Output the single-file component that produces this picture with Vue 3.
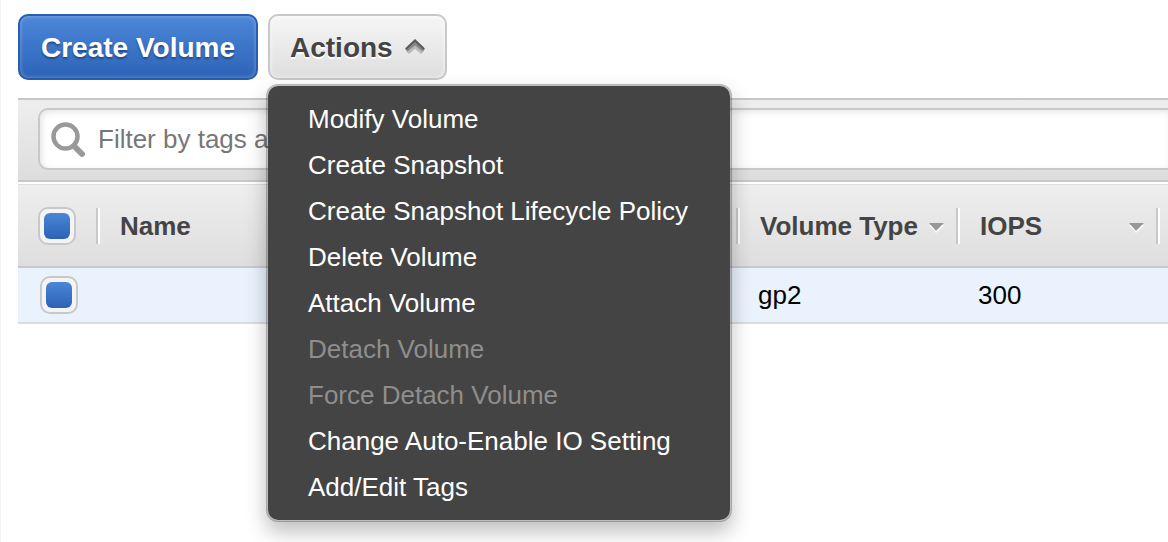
<script setup>
import { ref, computed } from "vue";

const menuOpen = ref(true);
const filter = ref("");

const actions = [
  { label: "Modify Volume" },
  { label: "Create Snapshot" },
  { label: "Create Snapshot Lifecycle Policy" },
  { label: "Delete Volume" },
  { label: "Attach Volume" },
  { label: "Detach Volume", disabled: true },
  { label: "Force Detach Volume", disabled: true },
  { label: "Change Auto-Enable IO Setting" },
  { label: "Add/Edit Tags" }
];

const volumes = ref([{ id: 1, name: "", type: "gp2", iops: 300, selected: true }]);

const allSelected = computed({
  get: () => volumes.value.every((v) => v.selected),
  set: (value) => volumes.value.forEach((v) => (v.selected = value))
});
</script>

<template>
  <main class="volumes">
    <div class="toolbar">
      <button type="button" class="btn primary">Create Volume</button>

      <div class="dropdown">
        <button
          type="button"
          class="btn"
          aria-haspopup="menu"
          :aria-expanded="menuOpen"
          @click="menuOpen = !menuOpen"
        >
          Actions
          <svg class="chevron" viewBox="0 0 20 18" aria-hidden="true">
            <path d="M1 12 L4 15 L10 10 L16 15 L19 12 L10 4 Z" fill="#bbb" />
            <path d="M10 0.5 L20 10 L17.5 12.5 L10 6.5 L2.5 12.5 L0 10 Z" fill="#888" />
            <path d="M1 10 L10 1.5 L19 10" fill="none" stroke="#5a5a5a" stroke-width="2" />
          </svg>
        </button>

        <div v-if="menuOpen" class="menu" role="menu">
          <button
            v-for="action in actions"
            :key="action.label"
            type="button"
            role="menuitem"
            class="menu-item"
            :disabled="action.disabled"
          >
            {{ action.label }}
          </button>
        </div>
      </div>
    </div>

    <div class="filter-bar">
      <label class="filter">
        <svg class="search" viewBox="0 0 36 36" aria-hidden="true">
          <path d="M24 25 L32 33" stroke="#999" stroke-width="6" stroke-linecap="round" />
          <circle cx="15.5" cy="15.5" r="12" fill="none" stroke="#999" stroke-width="4.5" />
        </svg>
        <input
          v-model="filter"
          type="text"
          aria-label="Filter volumes"
          placeholder="Filter by tags and attributes or search by keyword"
        />
      </label>
    </div>

    <table class="grid">
      <thead>
        <tr>
          <th class="col-check">
            <input v-model="allSelected" type="checkbox" aria-label="Select all volumes" />
          </th>
          <th><div class="head">Name</div></th>
          <th class="col-type">
            <div class="head">
              Volume Type
              <svg class="sort" viewBox="0 0 16 14" aria-hidden="true">
                <path d="M1 6 H16 L8 14 Z" fill="#fff" />
                <path d="M1 4 H16 L8 12 Z" fill="#999" />
              </svg>
            </div>
          </th>
          <th class="col-iops">
            <div class="head">
              IOPS
              <svg class="sort" viewBox="0 0 16 14" aria-hidden="true">
                <path d="M1 6 H16 L8 14 Z" fill="#fff" />
                <path d="M1 4 H16 L8 12 Z" fill="#999" />
              </svg>
            </div>
          </th>
          <th class="col-rest"><div class="head"></div></th>
        </tr>
      </thead>
      <tbody>
        <tr v-for="volume in volumes" :key="volume.id" :class="{ selected: volume.selected }">
          <td class="col-check">
            <input v-model="volume.selected" type="checkbox" aria-label="Select volume" />
          </td>
          <td>{{ volume.name }}</td>
          <td>{{ volume.type }}</td>
          <td>{{ volume.iops }}</td>
          <td></td>
        </tr>
      </tbody>
    </table>
  </main>
</template>

<style>
body {
  background: #fff;
}
</style>

<style scoped>
.volumes {
  box-sizing: border-box;
  min-height: 100vh;
  padding: 14px 0 0 17px;
  border-left: 1px solid #f3f3f3;
  font-family: "Liberation Sans", Arial, sans-serif;
  font-size: 26px;
  line-height: 30px;
  color: #000;
}

button,
input {
  font: inherit;
}

.toolbar {
  display: flex;
  gap: 10px;
  margin-bottom: 18px;
}

.btn {
  display: flex;
  align-items: center;
  gap: 12px;
  padding: 17px 20px 15px;
  border: 2px solid #c8c8c8;
  border-radius: 10px;
  background: linear-gradient(#f6f6f6, #dedede);
  box-shadow: inset 0 0 4px rgba(255, 255, 255, 0.8);
  color: #444;
  font-size: 28px;
  font-weight: bold;
  text-shadow: 0 2px 0 #fff;
  white-space: nowrap;
  cursor: pointer;
}

.btn.primary {
  padding-right: 21px;
  padding-left: 21px;
  border-color: #2a5db0;
  background: linear-gradient(#4c87d8, #2c63b8);
  box-shadow: inset 0 0 4px rgba(255, 255, 255, 0.35);
  color: #fff;
  text-shadow: 0 2px 2px rgba(0, 0, 0, 0.35);
}

.chevron {
  width: 20px;
  height: 18px;
}

/* --- Actions menu --- */
.dropdown {
  position: relative;
}

.menu {
  position: absolute;
  top: calc(100% + 4px);
  left: -2px;
  z-index: 2;
  display: flex;
  flex-direction: column;
  padding: 10px 0;
  border: 2px solid rgba(0, 0, 0, 0.25);
  border-radius: 12px;
  background: #444;
  background-clip: padding-box;
  box-shadow: 0 10px 20px rgba(0, 0, 0, 0.25);
}

.menu-item {
  padding: 8px 42px 8px 40px;
  border: none;
  background: transparent;
  color: #fff;
  text-align: left;
  white-space: nowrap;
  cursor: pointer;
}

.menu-item:disabled {
  color: #8e8e8e;
  cursor: default;
}

/* --- Filter --- */
.filter-bar {
  padding: 8px 0 10px 20px;
  border-top: 2px solid #c8c8c8;
  border-bottom: 2px solid #c8c8c8;
  background: linear-gradient(#eee, #ddd);
}

.filter {
  display: flex;
  align-items: center;
  gap: 12px;
  padding: 14px 10px;
  border: 2px solid #c8c8c8;
  border-right: none;
  border-radius: 10px 0 0 10px;
  background: #fff;
  box-shadow: inset 2px 2px 6px rgba(0, 0, 0, 0.1);
}

.filter input {
  flex: 1;
  min-width: 0;
  height: 30px;
  padding: 0;
  border: none;
  outline: none;
  background: transparent;
}

.filter input::placeholder {
  color: #777;
  opacity: 1;
}

.search {
  width: 36px;
  height: 36px;
  margin: -3px 0;
}

/* --- Table --- */
.grid {
  width: 100%;
  margin-top: 2px;
  border-collapse: separate;
  border-spacing: 0;
  table-layout: fixed;
}

th {
  height: 81px;
  padding: 0;
  border-top: 1px solid #ddd;
  border-bottom: 2px solid #c8c8c8;
  background: linear-gradient(#eee, #dedede);
  color: #444;
  text-align: left;
}

td {
  height: 54px;
  padding: 0 0 0 22px;
  border-bottom: 2px solid #dcdcdc;
}

.selected td {
  background: #eaf2fd;
}

.head {
  display: flex;
  align-items: center;
  justify-content: space-between;
  height: 36px;
  padding: 0 12px 0 22px;
  border-left: 2px solid #c8c8c8;
  box-shadow: inset 2px 0 0 #fff;
  white-space: nowrap;
}

.sort {
  width: 16px;
  height: 14px;
}

.col-check {
  width: 58px;
  padding-left: 20px;
}

td.col-check {
  padding-left: 22px;
}

.col-type {
  width: 220px;
}

.col-iops {
  width: 200px;
}

.col-rest {
  width: 12px;
}

.col-rest .head {
  padding: 0;
}

input[type="checkbox"] {
  appearance: none;
  display: block;
  box-sizing: border-box;
  width: 38px;
  height: 38px;
  margin: 0;
  padding: 4px;
  border: 2px solid #c8c8c8;
  border-radius: 10px;
  background: #f4f4f4;
  cursor: pointer;
}

input[type="checkbox"]:checked::before {
  content: "";
  display: block;
  height: 26px;
  border-radius: 6px;
  background: linear-gradient(#4a86d8, #2c62b6);
}
</style>
